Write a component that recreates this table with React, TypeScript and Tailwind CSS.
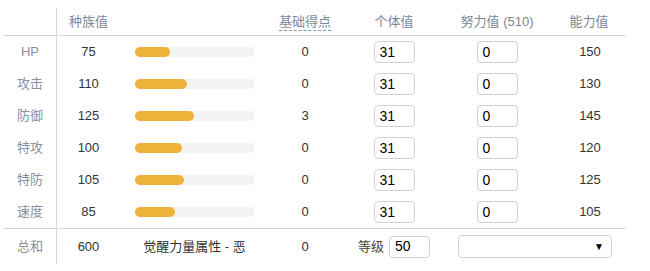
import React from "react";

const rows = [
  { name: "HP", base: 75, pt: 0, iv: 31, ev: 0, stat: 150 },
  { name: "攻击", base: 110, pt: 0, iv: 31, ev: 0, stat: 130 },
  { name: "防御", base: 125, pt: 3, iv: 31, ev: 0, stat: 145 },
  { name: "特攻", base: 100, pt: 0, iv: 31, ev: 0, stat: 120 },
  { name: "特防", base: 105, pt: 0, iv: 31, ev: 0, stat: 125 },
  { name: "速度", base: 85, pt: 0, iv: 31, ev: 0, stat: 105 },
];

const cols = "grid grid-cols-[53px_63px_148px_74px_104px_102px_78px]";
const font = { fontFamily: '"Liberation Sans", "Noto Sans CJK SC", sans-serif' };

function Input({ value }: { value: string }) {
  return (
    <div className="w-[41px] h-[22px] border border-[#ccd3dd] rounded-[4px] bg-white flex items-center pl-[5px] text-[14px] text-black">
      {value}
    </div>
  );
}

export default function App() {
  return (
    <div className="w-[650px] h-[271px] bg-white pt-[8px] pl-[4px] text-[13px] text-[#333]" style={font}>
      <div className="w-[622px]">
        <div className={`${cols} h-[28px] border-b border-[#d3d9e2] text-[#7d8799] items-center`}>
          <div className="h-full border-r border-[#d3d9e2]" />
          <div className="text-center">种族值</div>
          <div />
          <div className="text-center">
            <span className="border-b border-dashed border-[#8a93a3] pb-[1px]">基础得点</span>
          </div>
          <div className="text-center">个体值</div>
          <div className="text-center">努力值 (510)</div>
          <div className="text-center pl-[4px]">能力值</div>
        </div>
        {rows.map((r, i) => (
          <div
            key={r.name}
            className={`${cols} h-[32px] items-center ${i === rows.length - 1 ? "border-b border-[#d3d9e2] h-[33px]" : ""}`}
          >
            <div className="h-full flex items-center justify-center border-r border-[#d3d9e2] text-[#8a8f9f]">
              {r.name}
            </div>
            <div className="text-center">{r.base}</div>
            <div className="pl-[15px]">
              <div className="w-[120px] h-[10px] rounded-full bg-[#f2f2f2]">
                <div
                  className="h-full rounded-full bg-[#efb33b]"
                  style={{ width: `${(r.base / 255) * 120}px` }}
                />
              </div>
            </div>
            <div className="text-center">{r.pt}</div>
            <div className="flex justify-center">
              <Input value={String(r.iv)} />
            </div>
            <div className="flex justify-center">
              <Input value={String(r.ev)} />
            </div>
            <div className="text-center pl-[6px]">{r.stat}</div>
          </div>
        ))}
        <div className="grid grid-cols-[53px_63px_148px_74px_auto] h-[35px] items-center">
          <div className="h-full flex items-center justify-center border-r border-[#d3d9e2] text-[#8a8f9f]">
            总和
          </div>
          <div className="text-center">600</div>
          <div className="text-center pl-[1px]">觉醒力量属性 - 恶</div>
          <div className="text-center">0</div>
          <div className="flex items-center">
            <span className="ml-[16px] text-[#444]">等级</span>
            <div className="ml-[5px]">
              <Input value="50" />
            </div>
            <div className="ml-[28px] w-[154px] h-[23px] border border-[#ccd3dd] rounded-[4px] bg-white flex items-center justify-end pr-[7px] text-[10px] text-black">
              ▼
            </div>
          </div>
        </div>
      </div>
    </div>
  );
}
